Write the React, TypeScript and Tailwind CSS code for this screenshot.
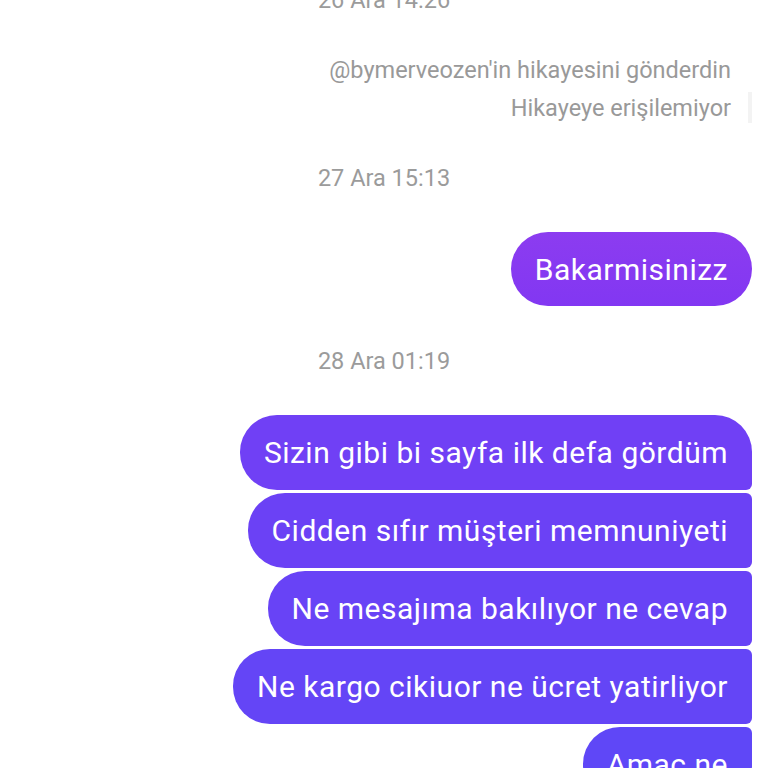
import React from 'react';

const font = { fontFamily: 'Roboto, "Noto Sans", sans-serif' };

function Stamp({ children }: { children: React.ReactNode }) {
  return <div className="text-center text-[23.5px] leading-[26px] text-[#9b9b9b]">{children}</div>;
}

export default function App() {
  return (
    <div className="h-[768px] w-[768px] overflow-hidden bg-white" style={font}>
      <div className="-mt-[13px] flex flex-col">
        <Stamp>26 Ara 14:26</Stamp>

        <div className="mt-[38px] flex justify-end pr-[16px]">
          <div className="text-right text-[23.5px] leading-[38px] text-[#999999]">
            <div>@bymerveozen'in hikayesini gönderdin</div>
            <div>Hikayeye erişilemiyor</div>
          </div>
          <div className="ml-[17px] mt-[41px] h-[31px] w-[4px] bg-[#f3f3f3]" />
        </div>

        <div className="mt-[38px]">
          <Stamp>27 Ara 15:13</Stamp>
        </div>

        <div className="mt-[41px] flex justify-end pr-[16px]">
          <div className="flex h-[74px] items-center rounded-full bg-gradient-to-b from-[#8c3cf0] to-[#8237f2] px-[24px] text-[30px] tracking-[0.5px] text-white">
            Bakarmisinizz
          </div>
        </div>

        <div className="mt-[42px]">
          <Stamp>28 Ara 01:19</Stamp>
        </div>

        <div className="mt-[41px] flex flex-col items-end gap-[3px] pr-[16px] text-[30px] tracking-[0.5px] text-white">
          <div className="flex h-[75px] items-center rounded-l-[37px] rounded-tr-[37px] rounded-br-[6px] bg-[#7040f5] px-[24px]">
            Sizin gibi bi sayfa ilk defa gördüm
          </div>
          <div className="flex h-[75px] items-center rounded-l-[37px] rounded-r-[6px] bg-[#6b41f5] px-[24px]">
            Cidden sıfır müşteri memnuniyeti
          </div>
          <div className="flex h-[75px] items-center rounded-l-[37px] rounded-r-[6px] bg-[#6843f6] px-[24px]">
            Ne mesajıma bakılıyor ne cevap
          </div>
          <div className="flex h-[75px] items-center rounded-l-[37px] rounded-r-[6px] bg-[#6445f6] px-[24px]">
            Ne kargo cikiuor ne ücret yatirliyor
          </div>
          <div className="flex h-[75px] items-center rounded-l-[37px] rounded-tr-[6px] rounded-br-[37px] bg-[#5f47f7] px-[24px]">
            Amac ne
          </div>
        </div>
      </div>
    </div>
  );
}
